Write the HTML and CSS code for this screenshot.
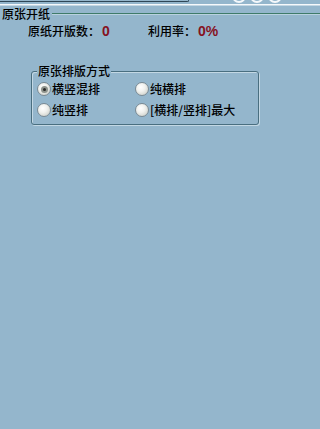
FILE: index.html
```html
<!DOCTYPE html>
<html lang="zh-CN">
<head>
<meta charset="utf-8">
<title>原张开纸</title>
<link rel="stylesheet" href="styles.css">
</head>
<body>
<div class="topstrip">
  <div class="tab"></div>
  <div class="dots"><span class="dot"></span><span class="dot"></span><span class="dot"></span></div>
</div>
<div class="whiteline"></div>
<div class="band">
  <div class="g1-head">
    <span class="g1-title">原张开纸</span>
    <span class="g1-line"></span>
  </div>
  <div class="info">
    <span class="cell"><span class="lbl">原纸开版数：</span><span class="num">0</span></span>
    <span class="cell"><span class="lbl">利用率：</span><span class="num">0%</span></span>
  </div>
  <div class="group2">
    <span class="g2-title">原张排版方式</span>
    <div class="rows">
      <div class="row">
        <label class="opt"><span class="radio checked"></span>横竖混排</label>
        <label class="opt"><span class="radio"></span>纯横排</label>
      </div>
      <div class="row">
        <label class="opt"><span class="radio"></span>纯竖排</label>
        <label class="opt"><span class="radio"></span>[横排/竖排]最大</label>
      </div>
    </div>
  </div>
</div>
</body>
</html>
```

FILE: styles.css
```css
html, body {
  margin: 0;
  padding: 0;
  background: #94b6cc;
  height: 100%;
}
body {
  font-family: "Noto Sans CJK SC", "Noto Sans", sans-serif;
  font-size: 12px;
  font-weight: 500;
  color: #000;
}
.topstrip {
  height: 4px;
  display: flex;
  overflow: hidden;
}
.tab {
  flex: none;
  width: 188px;
  height: 1px;
  border-bottom: 1px solid #2e4656;
  border-right: 1px solid #2e4656;
  border-bottom-right-radius: 3px;
}
.dots {
  display: flex;
  gap: 4px;
  margin-left: 43px;
}
.dot {
  flex: none;
  width: 10px;
  height: 10px;
  border: 2px solid #f4f8fb;
  border-radius: 50%;
  margin-top: -11px;
}
.whiteline {
  height: 1px;
  background: #f6f9fb;
  border-bottom: 1px solid #c4d7e3;
}
.band {
  background: #94b6cc;
}
.g1-head {
  display: flex;
  align-items: center;
  height: 14px;
  margin-top: 1px;
  padding-left: 2px;
}
.g1-title {
  line-height: 14px;
  padding-right: 2px;
}
.g1-line {
  flex: 1;
  height: 1px;
  background: #3f7b69;
  border-bottom: 1px solid #b9d2df;
}
.info {
  display: flex;
  margin-top: 3px;
  padding-left: 28px;
  line-height: 14px;
  height: 14px;
}
.cell {
  display: flex;
  align-items: baseline;
}
.cell:first-child {
  width: 120px;
}
.num {
  font-family: "Liberation Sans", Arial, sans-serif;
  font-weight: bold;
  font-size: 14px;
  color: #86121f;
  padding-left: 2px;
}
.group2 {
  margin-top: 33px;
  margin-left: 31px;
  width: 226px;
  height: 52px;
  border: 1px solid #4a6f80;
  border-radius: 3px;
  box-shadow: 1px 1px 0 #c3d8e4, inset 1px 1px 0 #c3d8e4;
  display: flex;
  flex-direction: column;
}
.g2-title {
  align-self: flex-start;
  margin-top: -8px;
  margin-left: 5px;
  padding: 0 1px;
  line-height: 14px;
  background: #94b6cc;
}
.rows {
  display: flex;
  flex-direction: column;
  gap: 7px;
  margin-top: 4px;
  padding-left: 5px;
}
.row {
  display: flex;
  height: 14px;
  line-height: 14px;
}
.opt {
  display: flex;
  align-items: center;
  gap: 1px;
}
.opt:first-child {
  width: 98px;
}
.radio {
  flex: none;
  width: 12px;
  height: 12px;
  border: 1px solid #7a8a94;
  border-radius: 50%;
  background: radial-gradient(circle at 40% 35%, #ffffff 0%, #f0f1ee 40%, #c2c6bf 100%);
  display: flex;
  align-items: center;
  justify-content: center;
}
.radio.checked::after {
  content: "";
  width: 3px;
  height: 3px;
  border-radius: 50%;
  background: #2a2a2a;
  border: 2px solid #8e938c;
}
```
